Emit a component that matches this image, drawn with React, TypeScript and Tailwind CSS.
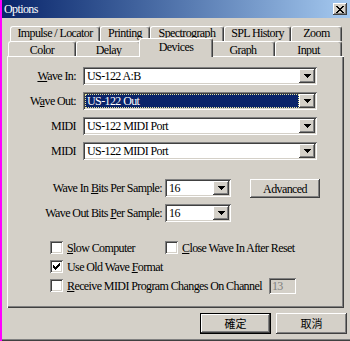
import type { ReactNode } from 'react'

const raised =
  'shadow-[inset_-1px_-1px_#404040,inset_1px_1px_#ffffff,inset_-2px_-2px_#808080,inset_2px_2px_#d4d0c8]'
const sunken =
  'shadow-[inset_1px_1px_#808080,inset_-1px_-1px_#ffffff,inset_2px_2px_#404040,inset_-2px_-2px_#d4d0c8]'

function Arrow() {
  return (
    <svg width="7" height="4" viewBox="0 0 7 4" shapeRendering="crispEdges">
      <path d="M0 0h7v1H0zM1 1h5v1H1zM2 2h3v1H2zM3 3h1v1H3z" fill="#000" />
    </svg>
  )
}

function Combo({ value, className, selected }: { value: string; className: string; selected?: boolean }) {
  return (
    <div className={`flex h-[18px] bg-white p-[2px] ${sunken} ${className}`}>
      <div className="flex min-w-0 flex-1 items-center">
        {selected ? (
          <div className="flex h-full flex-1 items-center border border-dotted border-[#e8e8a0] bg-[#0a246a] pl-[1px] text-white">
            {value}
          </div>
        ) : (
          <span className="pl-[2px]">{value}</span>
        )}
      </div>
      <div className={`flex w-[16px] items-center justify-center bg-[#d4d0c8] ${raised}`}>
        <Arrow />
      </div>
    </div>
  )
}

function Check({ checked, children }: { checked?: boolean; children: ReactNode }) {
  return (
    <div className="flex h-[13px] items-center">
      <div className={`flex h-[13px] w-[13px] shrink-0 items-center justify-center bg-white ${sunken}`}>
        {checked && (
          <svg width="7" height="7" viewBox="0 0 7 7" shapeRendering="crispEdges">
            <path
              d="M6 0h1v1H6zM5 1h2v1H5zM0 2h1v1H0zM4 2h3v1H4zM0 3h2v1H0zM3 3h3v1H3zM0 4h5v1H0zM1 5h3v1H1zM2 6h1v1H2z"
              fill="#000"
            />
          </svg>
        )}
      </div>
      <span className="ml-[4px] whitespace-nowrap">{children}</span>
    </div>
  )
}

// back row tabs sit partly behind the front row, text kept in the top part
function Tab({ label, className, selected, back }: { label: string; className: string; selected?: boolean; back?: boolean }) {
  const size = selected
    ? 'relative z-10 -mx-[2px] -mb-[1px] h-[19px] items-center pb-[3px]'
    : back
      ? 'h-[15px] items-start pt-[1px] leading-[10px]'
      : 'h-[15px] items-center pt-[1px]'
  return (
    <div
      className={`flex shrink-0 justify-center rounded-t-[3px] border-t border-r border-l border-t-white border-r-[#404040] border-l-white bg-[#d4d0c8] shadow-[inset_-1px_0_#808080] whitespace-nowrap ${size} ${className}`}
    >
      {label}
    </div>
  )
}

function Button({ label, primary }: { label: string; primary?: boolean }) {
  return (
    <div className={`h-[21px] w-[71px] ${primary ? 'border border-black' : ''}`}>
      <div
        className={`flex h-full w-full items-center justify-center bg-[#d4d0c8] font-['Noto_Sans_CJK_TC',sans-serif] text-[11px] tracking-normal ${raised}`}
      >
        {label}
      </div>
    </div>
  )
}

export default function App() {
  return (
    <div className="flex h-[341px] w-[350px] bg-[#ff00ff] font-['Liberation_Serif','Times_New_Roman',serif] text-[12px] leading-none tracking-[-0.6px] text-black">
      <div className="ml-[2px] flex h-[341px] w-[348px] flex-col bg-[#d4d0c8] shadow-[inset_0_-1px_#404040,inset_0_-2px_#808080]">
        {/* title bar */}
        <div className="flex h-[18px] items-center bg-linear-to-r from-[#0a246a] to-[#a6caf0] pl-[2px]">
          <span className="flex-1 text-white">Options</span>
          <div className={`mr-[3px] flex h-[12px] w-[14px] items-center justify-center bg-[#d4d0c8] ${raised}`}>
            <svg width="8" height="7" viewBox="0 0 8 7" shapeRendering="crispEdges">
              <path
                d="M0 0h2v1H0zM6 0h2v1H6zM1 1h2v1H1zM5 1h2v1H5zM2 2h4v1H2zM3 3h2v1H3zM2 4h4v1H2zM1 5h2v1H1zM5 5h2v1H5zM0 6h2v1H0zM6 6h2v1H6z"
                fill="#000"
              />
            </svg>
          </div>
        </div>

        {/* tabs */}
        <div className="mt-[8px] flex flex-col">
          <div className="ml-[8px] flex h-[15px]">
            <Tab label="Impulse / Locator" className="w-[90px]" back />
            <Tab label="Printing" className="w-[50px]" back />
            <Tab label="Spectrograph" className="w-[74px]" back />
            <Tab label="SPL History" className="w-[67px]" back />
            <Tab label="Zoom" className="w-[51px]" back />
          </div>
          <div className="ml-[6px] flex h-[15px] items-end">
            <Tab label="Color" className="w-[68px]" />
            <Tab label="Delay" className="w-[65px]" />
            <Tab label="Devices" className="w-[74px]" selected />
            <Tab label="Graph" className="w-[64px]" />
            <Tab label="Input" className="w-[67px]" />
          </div>
        </div>

        {/* panel */}
        <div className="ml-[5px] flex h-[252px] w-[337px] flex-col border-t border-l border-t-white border-l-white pt-[10px] shadow-[inset_-1px_-1px_#404040,inset_-2px_-2px_#808080]">
          <div className="flex flex-col gap-[7px]">
            <div className="flex items-center">
              <span className="w-[68px] text-right">
                <span className="underline underline-offset-[1px]">W</span>ave In:
              </span>
              <Combo value="US-122 A:B" className="ml-[7px] w-[234px]" />
            </div>
            <div className="flex items-center">
              <span className="w-[68px] text-right">
                W<span className="underline underline-offset-[1px]">a</span>ve Out:
              </span>
              <Combo value="US-122 Out" className="ml-[7px] w-[234px]" selected />
            </div>
            <div className="flex items-center">
              <span className="w-[68px] text-right">MIDI</span>
              <Combo value="US-122 MIDI Port" className="ml-[7px] w-[234px]" />
            </div>
            <div className="flex items-center">
              <span className="w-[68px] text-right">MIDI</span>
              <Combo value="US-122 MIDI Port" className="ml-[7px] w-[234px]" />
            </div>
          </div>

          <div className="mt-[19px] flex flex-col gap-[6px]">
            <div className="flex items-start">
              <span className="flex h-[18px] w-[154px] items-center justify-end">
                Wave In&nbsp;<span className="underline underline-offset-[1px]">B</span>its Per Sample:
              </span>
              <Combo value="16" className="ml-[3px] w-[66px]" />
              <div className={`ml-[19px] flex h-[19px] w-[70px] items-center justify-center bg-[#d4d0c8] ${raised}`}>
                Advanced
              </div>
            </div>
            <div className="flex items-center">
              <span className="flex h-[18px] w-[154px] items-center justify-end">
                Wave Out Bits&nbsp;<span className="underline underline-offset-[1px]">P</span>er Sample:
              </span>
              <Combo value="16" className="ml-[3px] w-[66px]" />
            </div>
          </div>

          <div className="mt-[19px] flex flex-col gap-[6px] pl-[42px]">
            <div className="flex">
              <div className="w-[115px]">
                <Check>
                  <span className="underline underline-offset-[1px]">S</span>low Computer
                </Check>
              </div>
              <Check>
                <span className="underline underline-offset-[1px]">C</span>lose Wave In After Reset
              </Check>
            </div>
            <Check checked>
              Use Old Wave <span className="underline underline-offset-[1px]">F</span>ormat
            </Check>
            <div className="flex h-[13px] items-center">
              <Check>
                <span className="underline underline-offset-[1px]">R</span>eceive MIDI Program Changes On Channel
              </Check>
              <div className={`ml-[7px] flex h-[16px] w-[27px] shrink-0 items-center pl-[3px] text-[#808080] ${sunken}`}>
                13
              </div>
            </div>
          </div>
        </div>

        {/* buttons */}
        <div className="mt-[5px] flex justify-end gap-[5px] pr-[3px]">
          <Button label="確定" primary />
          <Button label="取消" />
        </div>
      </div>
    </div>
  )
}
